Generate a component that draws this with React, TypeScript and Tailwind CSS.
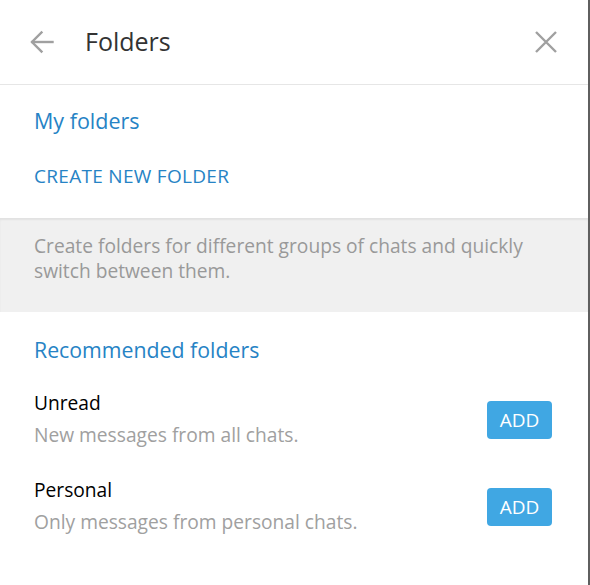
import React from 'react';

const folders = [
  { name: 'Unread', description: 'New messages from all chats.' },
  { name: 'Personal', description: 'Only messages from personal chats.' },
];

function BackIcon() {
  return (
    <svg width="24" height="24" viewBox="0 0 24 24" fill="none" stroke="#a0a0a0" strokeWidth="2.4" strokeLinecap="square">
      <path d="M22.5 12H2.5" />
      <path d="M11.5 2.5L2 12l9.5 9.5" />
    </svg>
  );
}

function CloseIcon() {
  return (
    <svg width="24" height="24" viewBox="0 0 24 24" fill="none" stroke="#a0a0a0" strokeWidth="2.4">
      <path d="M2 2l20 20M22 2L2 22" />
    </svg>
  );
}

export default function App() {
  return (
    <div className="flex h-[585px] w-[590px] bg-white font-['Open_Sans',sans-serif]">
      <div className="flex w-[588px] flex-col">
        <div className="flex h-[85px] shrink-0 items-center border-b border-[#e6e6e6] pl-[30px] pr-[30px]">
          <BackIcon />
          <span className="ml-[31px] pb-[1px] text-[25px] font-medium text-[#333]">Folders</span>
          <div className="ml-auto flex">
            <CloseIcon />
          </div>
        </div>

        <div className="flex flex-col px-[34px]">
          <div className="pt-[22px] text-[21.5px] font-medium leading-[28px] text-[#2683c5]">My folders</div>
          <div className="pt-[28px] pb-[29px] text-[19px] font-medium leading-[26px] tracking-[0.3px] text-[#2683c5]">
            CREATE NEW FOLDER
          </div>
        </div>

        <div className="h-[94px] shrink-0 bg-[#f0f0f0] px-[34px] pt-[15px] text-[19.2px] leading-[25px] text-[#999] shadow-[inset_0_2px_2px_rgba(0,0,0,0.06)]">
          Create folders for different groups of chats and quickly switch between them.
        </div>

        <div className="flex flex-col pl-[34px] pr-[36px]">
          <div className="pt-[24px] text-[21.3px] font-medium leading-[28px] text-[#2683c5]">Recommended folders</div>
          <div className="flex flex-col pt-[26px]">
            {folders.map((f) => (
              <div key={f.name} className="flex h-[87px] items-start">
                <div className="flex flex-col">
                  <span className="text-[19.2px] font-medium leading-[26px] text-black">{f.name}</span>
                  <span className="pt-[6px] text-[19.2px] leading-[26px] text-[#a0a0a0]">{f.description}</span>
                </div>
                <button className="ml-auto mt-[11px] flex h-[38px] w-[65px] items-center justify-center rounded-[4px] bg-[#40a7e3] text-[19px] font-medium text-white">
                  ADD
                </button>
              </div>
            ))}
          </div>
        </div>
      </div>
      <div className="w-[2px] bg-[#5f5f5f]" />
    </div>
  );
}
